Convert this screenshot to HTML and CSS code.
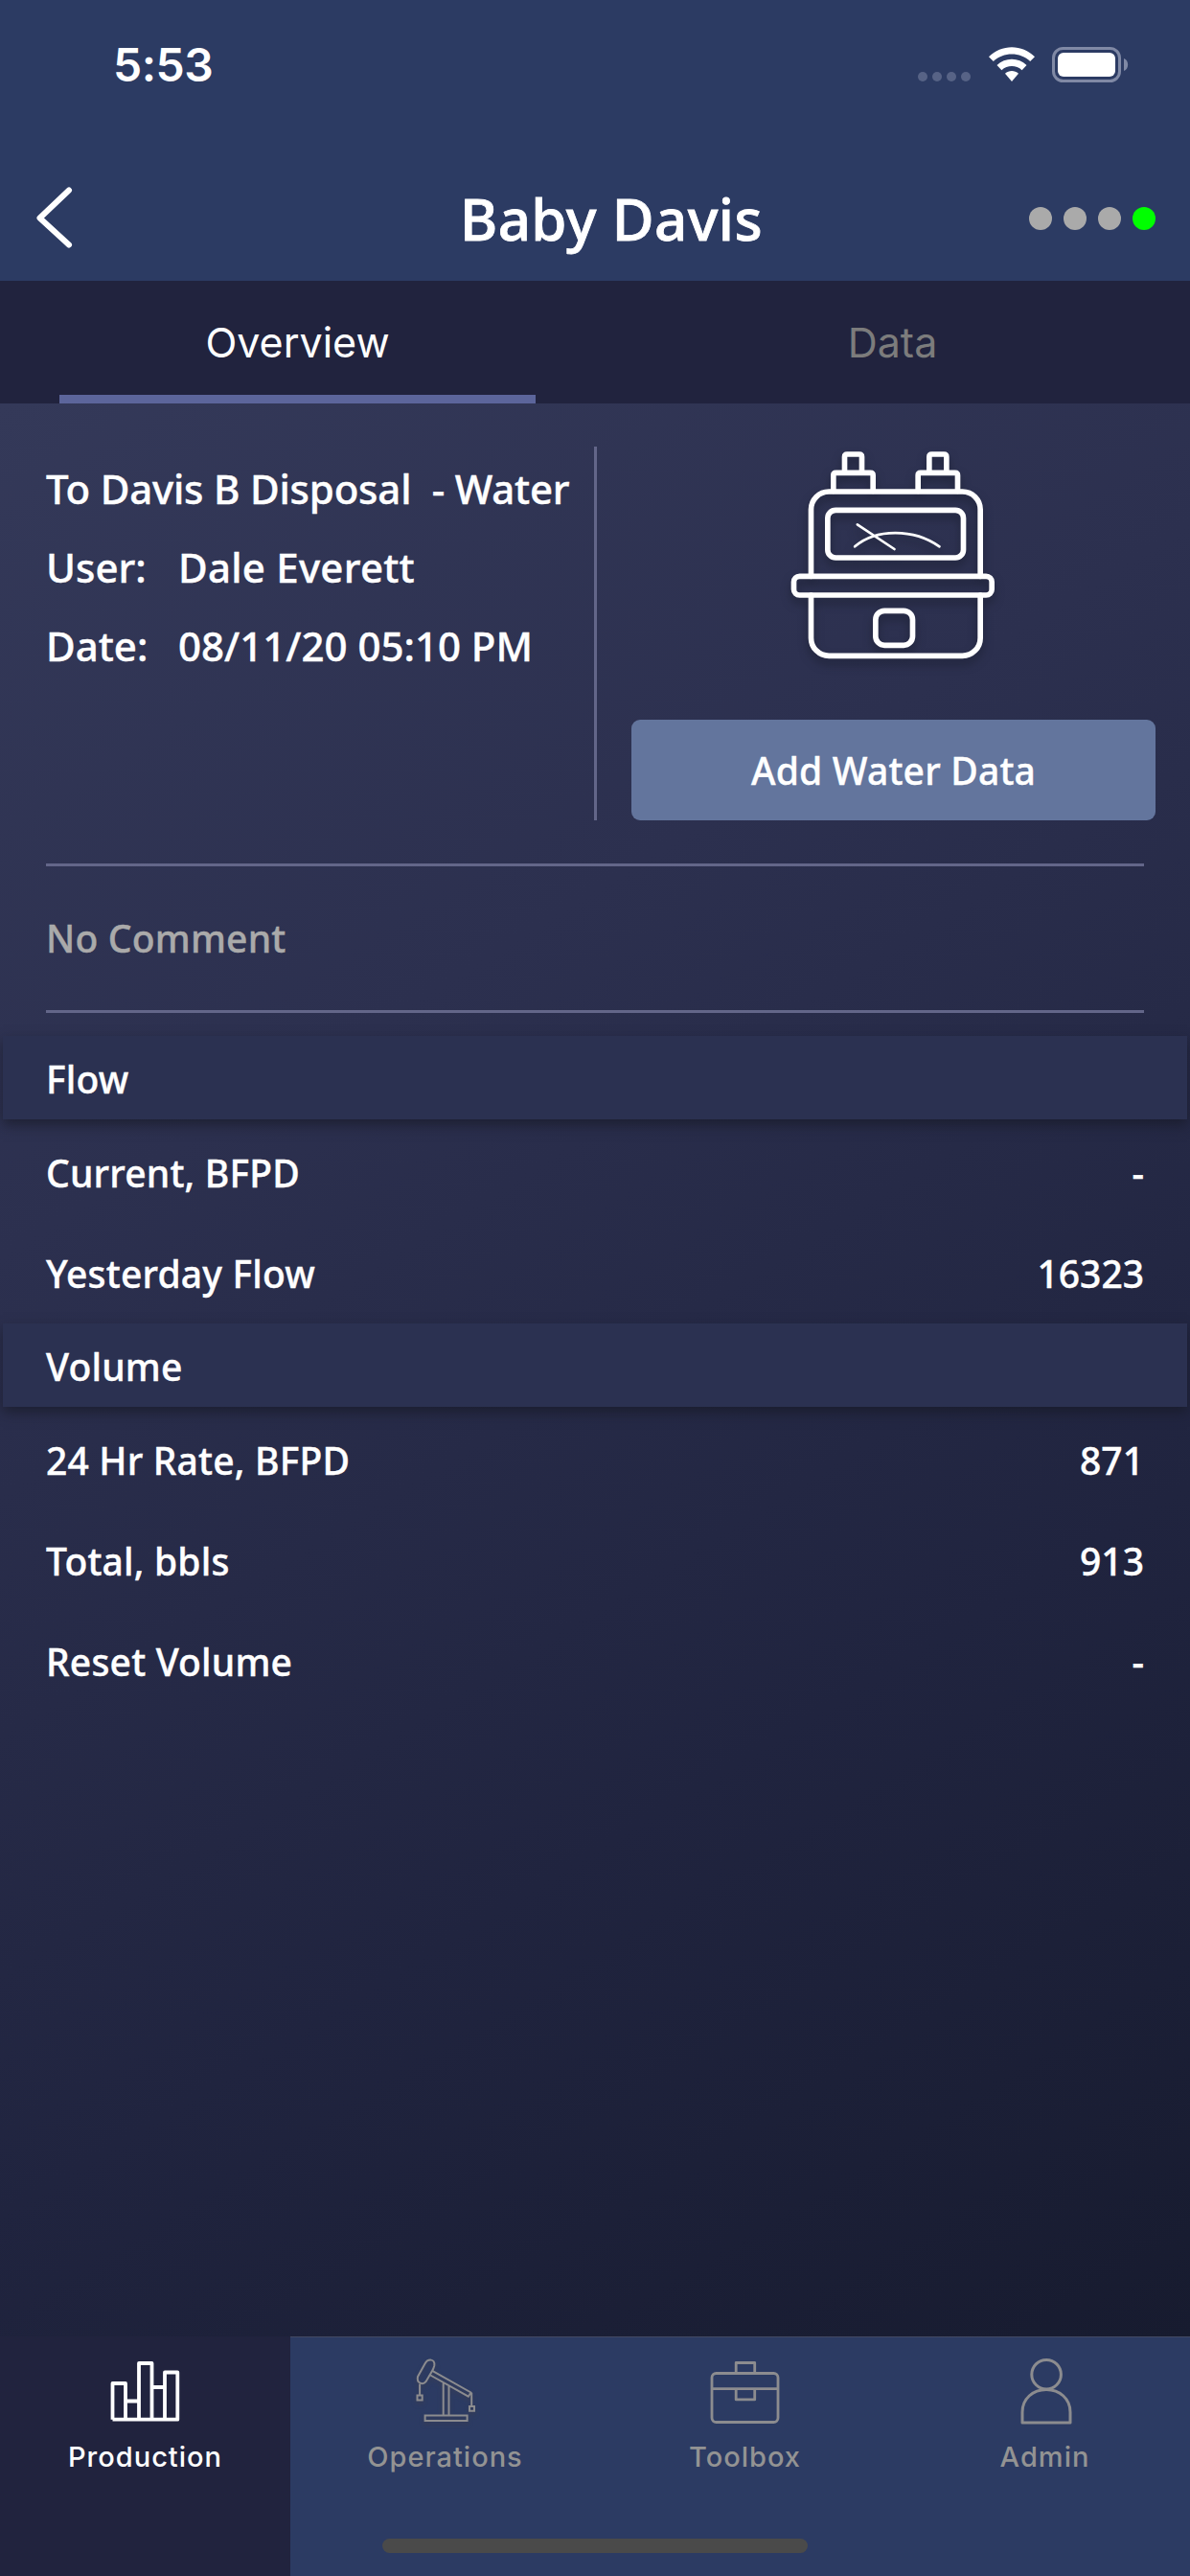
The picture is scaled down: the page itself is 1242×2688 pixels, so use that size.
FILE: index.html
```html
<!DOCTYPE html>
<html lang="en">
<head>
<meta charset="utf-8">
<title>Baby Davis</title>
<link rel="stylesheet" href="styles.css">
</head>
<body>
<div class="screen">
  <header class="header">
    <div class="status">
      <span class="time">5:53</span>
      <div class="status-icons">
        <div class="cell"><i></i><i></i><i></i><i></i></div>
        <svg class="wifi" width="48" height="36" viewBox="0 0 48 36">
          <path fill="#fff" d="M0 10.2C13-3.2 35-3.2 48 10.2l-4.8 4.9C33 5 15 5 4.800 15.100z"/>
          <path fill="#fff" d="M8.500 19C17 10.600 31 10.600 39.500 19l-4.900 5.200c-6-5.500-15.200-5.500-21.200 0z"/>
          <path fill="#fff" d="M17 27.700c4-3.600 10-3.600 14 0L24 36z"/>
        </svg>
        <svg class="battery" width="80" height="37" viewBox="0 0 80 37">
          <rect x="1.500" y="1.500" width="69" height="34" rx="10" fill="none" stroke="#8089a5" stroke-width="3"/>
          <rect x="6" y="6" width="60" height="25" rx="6" fill="#fff"/>
          <path d="M75 12c5.500 2 5.500 11 0 13z" fill="#8089a5"/>
        </svg>
      </div>
    </div>
    <div class="nav">
      <svg class="back" width="46" height="68" viewBox="0 0 46 68"><path d="M42 5.500 11.500 34.500 42 62.500" fill="none" stroke="#fff" stroke-width="6" stroke-linecap="round" stroke-linejoin="round"/></svg>
      <h1 class="title">Baby Davis</h1>
      <div class="dots"><i></i><i></i><i></i><i class="on"></i></div>
    </div>
  </header>

  <nav class="tabs">
    <div class="tab active">Overview</div>
    <div class="tab">Data</div>
  </nav>

  <main class="content">
    <section class="summary">
      <div class="info">
        <p class="line name">To Davis B Disposal&nbsp; - Water</p>
        <p class="line"><span class="key">User:</span><span class="person">Dale Everett</span></p>
        <p class="line"><span class="key">Date:</span>08/11/20 05:10 PM</p>
      </div>
      <div class="meter-side">
        <svg class="meter" width="300" height="240" viewBox="7.500 90 900 720" fill="none" stroke="#fff" stroke-width="17" stroke-linecap="round" stroke-linejoin="round">
          <path d="M198 484V275a56 56 0 0 1 56-56H672a56 56 0 0 1 56 56V484M198 543V677a56 56 0 0 0 56 56H672a56 56 0 0 0 56-56V543"/>
          <path d="M268 217V168q0-8 8-8H384q8 0 8 8V217M303 160V110q0-8 8-8H349q8 0 8 8V160"/>
          <path d="M533 217V168q0-8 8-8H649q8 0 8 8V217M568 160V110q0-8 8-8H614q8 0 8 8V160"/>
          <rect x="250" y="277" width="425" height="149" rx="25"/>
          <rect x="144" y="484" width="620" height="59" rx="18"/>
          <rect x="400" y="592" width="116" height="108" rx="28"/>
          <path stroke-width="8" d="M335 391C400 334 520 334 600 391M343 322 459 399"/>
        </svg>
        <button class="add">Add Water Data</button>
      </div>
    </section>
    <p class="comment">No Comment</p>

    <h2 class="section">Flow</h2>
    <div class="row"><span>Current, BFPD</span><span class="value">-</span></div>
    <div class="row"><span>Yesterday Flow</span><span class="value">16323</span></div>
    <h2 class="section">Volume</h2>
    <div class="row"><span>24 Hr Rate, BFPD</span><span class="value">871</span></div>
    <div class="row"><span>Total, bbls</span><span class="value">913</span></div>
    <div class="row"><span>Reset Volume</span><span class="value">-</span></div>
  </main>

  <nav class="bottom">
    <div class="item current">
      <svg width="80" height="80" viewBox="0 0 80 80" fill="none" stroke="currentColor" stroke-width="3.800" stroke-linejoin="round"><path d="M5.500 68.700V31H19V68.700M19 49.500H33M33 68.700V10H46.500V68.700M46.500 35H60M60 68.700V19.500H73.300V68.700zM5.500 68.700H60"/></svg>
      <span>Production</span>
    </div>
    <div class="item">
      <svg class="pump" width="80" height="80" viewBox="0 0 80 80" fill="none" stroke="currentColor" stroke-width="2">
        <path d="M11 24 18.500 10.500C21.500 5 29.500 5 28.300 12.500Q27.500 15.500 26.200 17.800L19.500 29.200C16.500 33 9.500 31 11 24z"/>
        <path d="M26.200 17.800 66.500 40.500 63.800 44.700 23.400 22M37.700 30V64M43.500 33.500V64M13.100 31.500V43.500M67.200 41V55"/>
        <path d="M10.500 43.500h5.200v5h-5.200zM65 55h5v4.700h-5zM18.600 64.400H62.600V70.100H18.600z"/>
      </svg>
      <span>Operations</span>
    </div>
    <div class="item">
      <svg width="80" height="80" viewBox="0 0 80 80" fill="none" stroke="currentColor" stroke-width="2.800"><rect x="5" y="20.500" width="69" height="51" rx="4.500"/><path d="M5 36.700H74M30.200 20.500V9.500H49.700V20.500M30.200 36.700V47.900H49.700V36.700" stroke-linejoin="round"/></svg>
      <span>Toolbox</span>
    </div>
    <div class="item">
      <svg width="80" height="80" viewBox="0 0 80 80" fill="none" stroke="currentColor" stroke-width="3" stroke-linejoin="round"><circle cx="41.100" cy="21.700" r="15.300"/><path d="M16 72V61C16 47 27 37.500 41 37.500S66 47 66 61V72z"/></svg>
      <span>Admin</span>
    </div>
    <div class="home"></div>
  </nav>
</div>
</body>
</html>
```
FILE: styles.css
```css
* { box-sizing: border-box; margin: 0; padding: 0; }
body { background: #16192c; }
.screen {
  width: 1242px;
  height: 2688px;
  display: flex;
  flex-direction: column;
  color: #fff;
  font-family: "Noto Sans", sans-serif;
  font-weight: 500;
  font-size: 39px;
  overflow: hidden;
}
.header { height: 293px; background: #2c3b63; }
.status {
  height: 161px;
  padding: 0 61px 0 118px;
  display: flex;
  justify-content: space-between;
}
.time {
  font: 600 48px/58px "Inter", sans-serif;
  letter-spacing: -0.5px;
  padding-top: 39px;
}
.status-icons { display: flex; padding-top: 49px; height: 86px; }
.cell { display: flex; gap: 5px; align-items: flex-end; padding-bottom: 1px; }
.cell i { width: 10px; height: 10px; border-radius: 5px; background: #576386; }
.wifi { margin-left: 19px; }
.battery { margin-left: 18px; margin-right: 3px; }
.nav {
  height: 132px;
  display: grid;
  grid-template-columns: 202px 1fr 168px;
  align-items: center;
}
.back { margin-left: 30px; }
.title {
  font-size: 60px;
  line-height: 82px;
  font-weight: 500;
  text-align: center;
  padding-top: 1px;
  letter-spacing: .4px;
  -webkit-text-stroke: .8px currentColor;
}
.dots { display: flex; gap: 12px; padding-top: 1px; }
.dots i { width: 24px; height: 24px; border-radius: 50%; background: #aaa; }
.dots .on { background: #0f0; }

.tabs {
  height: 128px;
  background: #21233e;
  display: grid;
  grid-template-columns: 1fr 1fr;
}
.tab {
  font: 400 43px/128px "Inter", sans-serif;
  text-align: center;
  color: #7c7c7c;
  height: 128px;
  margin: 0 62px;
}
.tab.active { color: #fff; border-bottom: 9px solid #5c659b; }

.content {
  flex: 1;
  padding-top: 45px;
  letter-spacing: .2px;
  -webkit-text-stroke: .4px currentColor;
  background: linear-gradient(148.400deg, #343959 0%, #2c304f 32%, #20243f 68%, #171b2f 100%);
}
.summary { display: flex; height: 390px; }
.info { width: 623px; padding: 3px 0 0 48px; border-right: 3px solid #636689; }
.line { font-size: 42px; line-height: 82px; white-space: nowrap; letter-spacing: 0; }
.line.name { letter-spacing: -0.2px; }
.person { letter-spacing: .25px; }
.key { display: inline-block; width: 138px; }
.meter-side {
  width: 547px;
  margin-left: 36px;
  padding-top: 4px;
  display: flex;
  flex-direction: column;
  align-items: center;
  justify-content: space-between;
}
.meter { filter: drop-shadow(0 6px 5px rgba(18, 22, 34, .5)); }
.add {
  width: 100%;
  height: 105px;
  border: 0;
  border-radius: 9px;
  background: #63759d;
  color: #fff;
  font: inherit;
  letter-spacing: .2px;
}
.comment {
  margin: 45px 48px 24px;
  height: 156px;
  line-height: 150px;
  border-top: 3px solid #636689;
  border-bottom: 3px solid #636689;
  color: #aaa;
}
.section {
  margin: 0 3px 3px;
  height: 87px;
  padding: 3px 45px 0;
  line-height: 84px;
  font-size: 39px;
  font-weight: 500;
  background: #2b3151;
  box-shadow: 0 6px 12px rgba(22, 24, 34, .6);
}
.row {
  height: 105px;
  padding: 0 48px;
  display: flex;
  align-items: center;
  justify-content: space-between;
}
.value { letter-spacing: 0; }

.bottom {
  position: relative;
  height: 250px;
  display: flex;
  justify-content: space-between;
  background: #2c3b63;
  border-top: 1px solid #434963;
}
.item {
  width: 303px;
  margin-top: -1px;
  padding-top: 18px;
  display: flex;
  flex-direction: column;
  align-items: center;
  color: #8c8c8f;
  font: 450 29px/36px "Inter", sans-serif;
  letter-spacing: 1px;
}
.item span { margin-top: 10px; color: #939393; }
.item.current, .item.current span { color: #fff; }
.item.current { background: #21233e; }
.pump { filter: drop-shadow(0 3px 2px rgba(60, 60, 75, .6)); }
.home {
  position: absolute;
  left: 399px;
  bottom: 24px;
  width: 444px;
  height: 15px;
  border-radius: 8px;
  background: #4a4a4a;
}
```
